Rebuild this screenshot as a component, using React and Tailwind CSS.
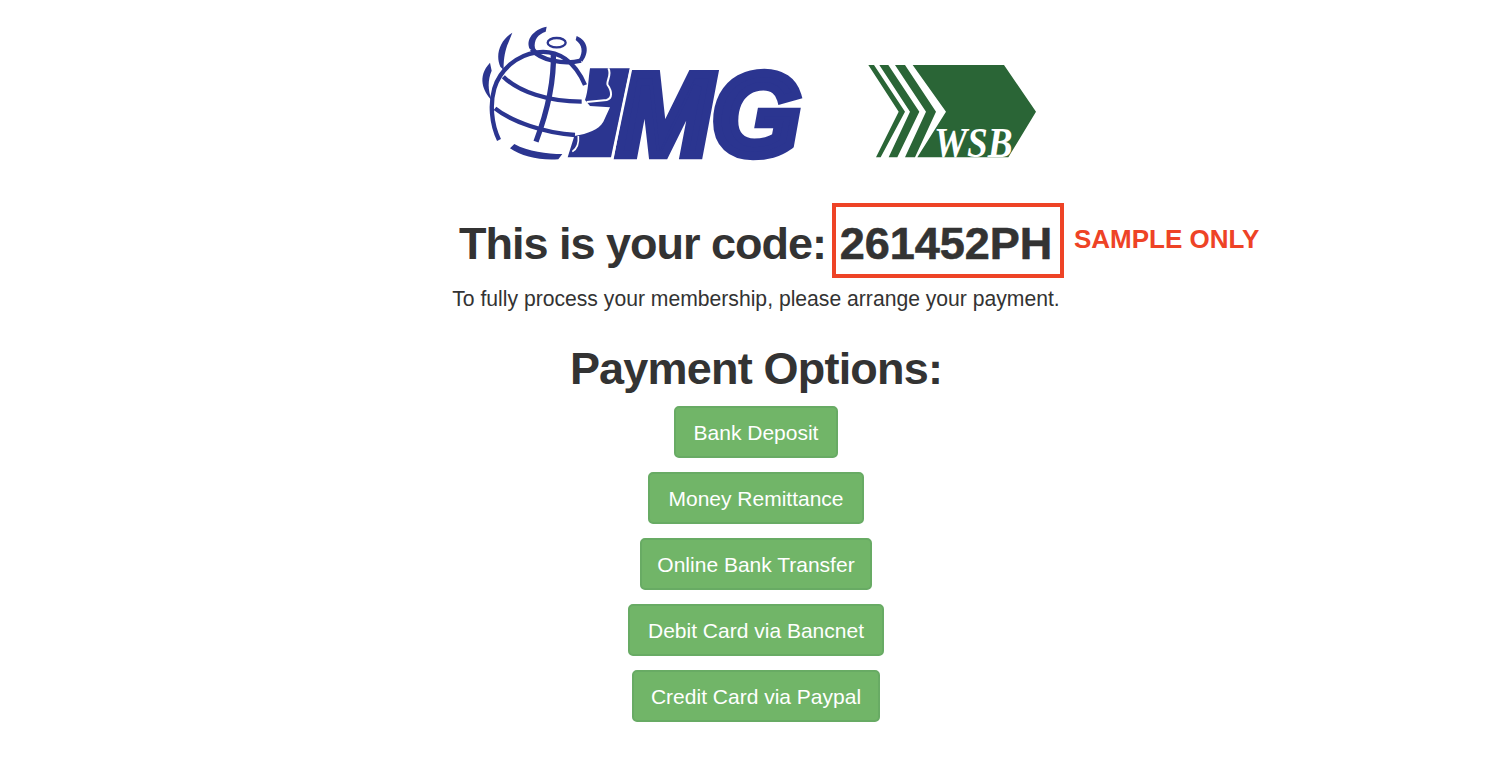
import React from "react";

const options = [
  { label: "Bank Deposit", width: "w-[164px]" },
  { label: "Money Remittance", width: "w-[216px]" },
  { label: "Online Bank Transfer", width: "w-[232px]" },
  { label: "Debit Card via Bancnet", width: "w-[256px]" },
  { label: "Credit Card via Paypal", width: "w-[248px]" },
];

const ImgLogo = () => (
  <svg width="350" height="170" viewBox="0 0 1050 510" fill="none">
    <g transform="translate(15 15)">
      {/* globe */}
      <g stroke="#2b3590" strokeWidth="13" fill="none">
        <path d="M72 360 C48 310 45 250 58 205 C75 150 125 105 185 97 C250 88 300 125 330 195" />
        <path d="M85 170 C130 215 220 245 320 245" />
        <path d="M60 265 C110 305 210 340 300 345" />
        <path d="M235 98 C238 190 215 280 183 365" strokeWidth="16" />
        <path d="M170 88 C195 120 265 135 318 122" />
      </g>
      <g fill="#2b3590">
        <path d="M112 38 L100 68 C90 90 85 120 86 150 L76 140 C60 105 75 60 112 38 Z" />
        <path d="M215 20 L212 35 C190 42 175 60 180 85 L190 98 L165 88 C150 60 175 28 215 20 Z" />
        <path d="M305 48 C338 62 345 95 322 125 L312 118 C325 95 322 75 302 60 Z" />
        <path d="M45 128 L50 152 C38 180 38 210 50 240 C25 215 5 170 45 128 Z" />
        <path d="M118 372 C160 395 215 402 262 402 L250 418 C195 422 140 410 105 385 Z" />
      </g>
      <ellipse cx="245" cy="68" rx="27" ry="14" stroke="#2b3590" strokeWidth="7" />
      {/* bar with the islands cut out */}
      <path d="M345 145 L465 145 L410 412 L278 412 L298 348 C340 340 370 330 385 305 L405 262 L345 258 L330 240 C340 215 340 175 345 145 Z" fill="#2b3590" />
      <path d="M400 145 C412 165 392 185 398 195 C412 215 412 235 395 240 L335 246" stroke="#fff" strokeWidth="6" />
      <path d="M310 348 C312 370 308 385 292 395" stroke="#fff" strokeWidth="5" />
    </g>
    <text
      x="440"
      y="420"
      textLength="552"
      lengthAdjust="spacingAndGlyphs"
      fontFamily="'Liberation Sans', sans-serif"
      fontWeight="700"
      fontStyle="italic"
      fontSize="350"
      fill="#2b3590"
      stroke="#2b3590"
      strokeWidth="26"
    >
      MG
    </text>
    <path d="M484 156 L426 432" stroke="#fff" strokeWidth="8" />
  </svg>
);

const WsbLogo = () => (
  <svg width="200" height="120" viewBox="0 0 600 360" fill="none">
    <g transform="translate(30 30)">
      <g fill="#2a6536">
        <path d="M25 15 L42 15 L135 155 L62 292 L48 292 L116 155 Z" />
        <path d="M58 15 L85 15 L178 155 L112 292 L86 292 L150 155 Z" />
        <path d="M105 15 L135 15 L228 155 L165 292 L135 292 L198 155 Z" />
        <path d="M158 15 L432 15 L528 155 L445 292 L172 292 L258 155 Z" />
      </g>
      <text
        x="222"
        y="290"
        textLength="236"
        lengthAdjust="spacingAndGlyphs"
        fontFamily="'Liberation Serif', serif"
        fontWeight="700"
        fontStyle="italic"
        fontSize="128"
        fill="#fff"
      >
        WSB
      </text>
    </g>
  </svg>
);

const App = () => {
  return (
    <div className="min-h-[766px] bg-white text-[#333] font-['Liberation_Sans',Arial,sans-serif] overflow-hidden">
      <div className="flex justify-center items-start pt-[15px] pl-2 gap-[30px]">
        <ImgLogo />
        <div className="mt-[35px]">
          <WsbLogo />
        </div>
      </div>

      <div className="flex justify-center mt-[18px] pl-[11px]">
        <div className="relative flex items-center">
          <h1 className="text-[45px] leading-[50px] tracking-[-1px] font-bold mr-[6px] mt-[7px]">This is your code:</h1>
          <div className="w-[232px] h-[75px] border-[4px] border-[#ee4326] flex items-center justify-center pt-[7px] pr-[4px] text-[45px] font-bold [-webkit-text-stroke:0.6px_#333]">
            261452PH
          </div>
          <span className="absolute left-[615px] top-[21px] whitespace-nowrap text-[26px] leading-[30px] font-bold text-[#ee4326]">
            SAMPLE ONLY
          </span>
        </div>
      </div>

      <p className="text-center text-[21.15px] leading-[28px] mt-[7px]">
        To fully process your membership, please arrange your payment.
      </p>

      <h2 className="text-center text-[45px] leading-[50px] tracking-[-0.8px] font-bold mt-[31px]">Payment Options:</h2>

      <div className="flex flex-col items-center gap-[14px] mt-[12px]">
        {options.map((option) => (
          <button
            key={option.label}
            className={`${option.width} h-[52px] pt-[2px] rounded-[5px] border-2 border-[#68ab64] bg-[#71b568] text-white text-[21px]`}
          >
            {option.label}
          </button>
        ))}
      </div>
    </div>
  );
};

export default App;
